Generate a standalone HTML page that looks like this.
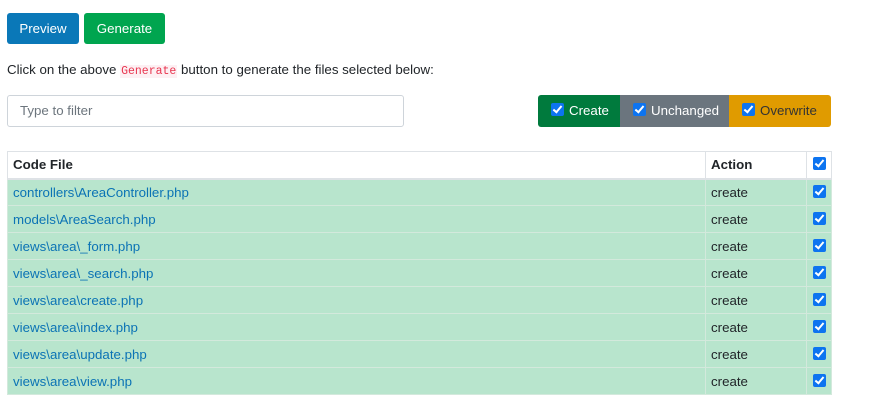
<!DOCTYPE html>
<html><head><style>
*{box-sizing:border-box;margin:0;padding:0}
body{width:870px;height:410px;background:#fff;font-family:"Liberation Sans","DejaVu Sans",sans-serif;font-size:13.3px;color:#212529;position:relative;overflow:hidden}
.btn{position:absolute;top:13px;height:31px;border-radius:3px;color:#fff;font-size:13.3px;line-height:31px;text-align:center}
p{position:absolute;left:7px;top:62px;font-size:13.3px}
code{font-family:"Liberation Mono",monospace;font-size:11.5px;color:#e8344e;background:#fdf0f3;padding:0 1px}
.inp{position:absolute;left:7px;top:95px;width:397px;height:32px;border:1px solid #ced4da;border-radius:3px;color:#6c757d;padding-left:12px;line-height:30px}
.grp{position:absolute;left:538px;top:95px;height:32px;display:flex;border-radius:3px;overflow:hidden}
.grp div{height:32px;line-height:31px;padding-left:13px;font-size:13.3px;color:#fff;position:relative}
.cb{display:inline-block;width:13px;height:13px;background:#0d74f0;border-radius:2px;position:relative;vertical-align:-1px;margin-right:5px}
.cb:after{content:"";position:absolute;left:4px;top:1px;width:3px;height:7px;border:solid #fff;border-width:0 2px 2px 0;transform:rotate(40deg)}
table{position:absolute;left:7px;top:151px;width:825px;border-collapse:collapse}
td,th{border:1px solid #dee2e6;height:27px;padding:0 5px;text-align:left;font-size:13.3px}
th{font-weight:bold;height:27px;border-bottom:2px solid #dee2e6}
tr.s td{background:#b8e5cd;border-color:#d3e9dc}
td a{color:#0b73b5;text-decoration:none}
td.c{text-align:center;padding:0}
</style></head><body>
<div class="btn" style="left:7px;width:72px;background:#0a78b8">Preview</div>
<div class="btn" style="left:84px;width:81px;background:#00a54f">Generate</div>
<p>Click on the above <code>Generate</code> button to generate the files selected below:</p>
<div class="inp">Type to filter</div>
<div class="grp">
<div style="width:82px;background:#007a3d"><span class="cb"></span>Create</div>
<div style="width:109px;background:#6b757e"><span class="cb"></span>Unchanged</div>
<div style="width:102px;background:#e09b00;color:#333"><span class="cb"></span>Overwrite</div>
</div>
<table>
<tr><th style="width:698px">Code File</th><th style="width:101px">Action</th><th class="c" style="text-align:center"><span class="cb" style="margin:0"></span></th></tr>
<tr class="s"><td><a>controllers\AreaController.php</a></td><td>create</td><td class="c"><span class="cb" style="margin:0"></span></td></tr>
<tr class="s"><td><a>models\AreaSearch.php</a></td><td>create</td><td class="c"><span class="cb" style="margin:0"></span></td></tr>
<tr class="s"><td><a>views\area\_form.php</a></td><td>create</td><td class="c"><span class="cb" style="margin:0"></span></td></tr>
<tr class="s"><td><a>views\area\_search.php</a></td><td>create</td><td class="c"><span class="cb" style="margin:0"></span></td></tr>
<tr class="s"><td><a>views\area\create.php</a></td><td>create</td><td class="c"><span class="cb" style="margin:0"></span></td></tr>
<tr class="s"><td><a>views\area\index.php</a></td><td>create</td><td class="c"><span class="cb" style="margin:0"></span></td></tr>
<tr class="s"><td><a>views\area\update.php</a></td><td>create</td><td class="c"><span class="cb" style="margin:0"></span></td></tr>
<tr class="s"><td><a>views\area\view.php</a></td><td>create</td><td class="c"><span class="cb" style="margin:0"></span></td></tr>
</table>
</body></html>
